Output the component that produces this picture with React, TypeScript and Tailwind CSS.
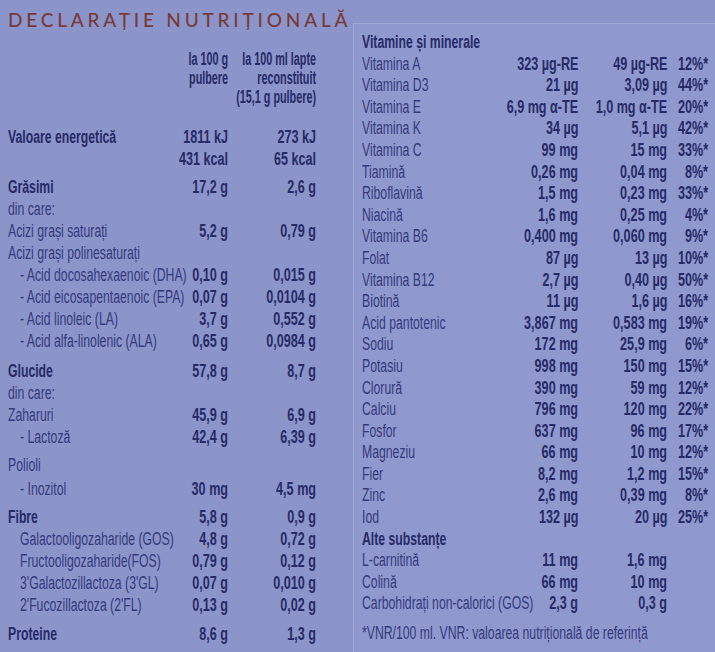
import React from "react";

type Row = {
  label: string;
  a?: string;
  b?: string;
  c?: string;
  bold?: boolean;
  indent?: boolean;
  gap?: string;
};

const leftRows: Row[] = [
  { label: "Valoare energetică", a: "1811 kJ", b: "273 kJ", bold: true },
  { label: "", a: "431 kcal", b: "65 kcal" },
  { label: "Grăsimi", a: "17,2 g", b: "2,6 g", bold: true, gap: "mt-[6px]" },
  { label: "din care:" },
  { label: "Acizi grași saturați", a: "5,2 g", b: "0,79 g" },
  { label: "Acizi grași polinesaturați" },
  { label: "- Acid docosahexaenoic (DHA)", a: "0,10 g", b: "0,015 g", indent: true },
  { label: "- Acid eicosapentaenoic (EPA)", a: "0,07 g", b: "0,0104 g", indent: true },
  { label: "- Acid linoleic (LA)", a: "3,7 g", b: "0,552 g", indent: true },
  { label: "- Acid alfa-linolenic (ALA)", a: "0,65 g", b: "0,0984 g", indent: true },
  { label: "Glucide", a: "57,8 g", b: "8,7 g", bold: true, gap: "mt-[8px]" },
  { label: "din care:" },
  { label: "Zaharuri", a: "45,9 g", b: "6,9 g" },
  { label: "- Lactoză", a: "42,4 g", b: "6,39 g", indent: true },
  { label: "Polioli", gap: "mt-[6px]" },
  { label: "- Inozitol", a: "30 mg", b: "4,5 mg", indent: true, gap: "mt-[2px]" },
  { label: "Fibre", a: "5,8 g", b: "0,9 g", bold: true, gap: "mt-[6px]" },
  { label: "Galactooligozaharide (GOS)", a: "4,8 g", b: "0,72 g", indent: true },
  { label: "Fructooligozaharide(FOS)", a: "0,79 g", b: "0,12 g", indent: true },
  { label: "3'Galactozillactoza (3'GL)", a: "0,07 g", b: "0,010 g", indent: true },
  { label: "2'Fucozillactoza (2'FL)", a: "0,13 g", b: "0,02 g", indent: true },
  { label: "Proteine", a: "8,6 g", b: "1,3 g", bold: true, gap: "mt-[7px]" },
  { label: "Vitamine și minerale", bold: true, gap: "mt-[5px]" },
];

const rightRows: Row[] = [
  { label: "Vitamine și minerale", bold: true },
  { label: "Vitamina A", a: "323 µg-RE", b: "49 µg-RE", c: "12%*" },
  { label: "Vitamina D3", a: "21 µg", b: "3,09 µg", c: "44%*" },
  { label: "Vitamina E", a: "6,9 mg α-TE", b: "1,0 mg α-TE", c: "20%*" },
  { label: "Vitamina K", a: "34 µg", b: "5,1 µg", c: "42%*" },
  { label: "Vitamina C", a: "99 mg", b: "15 mg", c: "33%*" },
  { label: "Tiamină", a: "0,26 mg", b: "0,04 mg", c: "8%*" },
  { label: "Riboflavină", a: "1,5 mg", b: "0,23 mg", c: "33%*" },
  { label: "Niacină", a: "1,6 mg", b: "0,25 mg", c: "4%*" },
  { label: "Vitamina B6", a: "0,400 mg", b: "0,060 mg", c: "9%*" },
  { label: "Folat", a: "87 µg", b: "13 µg", c: "10%*" },
  { label: "Vitamina B12", a: "2,7 µg", b: "0,40 µg", c: "50%*" },
  { label: "Biotină", a: "11 µg", b: "1,6 µg", c: "16%*" },
  { label: "Acid pantotenic", a: "3,867 mg", b: "0,583 mg", c: "19%*" },
  { label: "Sodiu", a: "172 mg", b: "25,9 mg", c: "6%*" },
  { label: "Potasiu", a: "998 mg", b: "150 mg", c: "15%*" },
  { label: "Clorură", a: "390 mg", b: "59 mg", c: "12%*" },
  { label: "Calciu", a: "796 mg", b: "120 mg", c: "22%*" },
  { label: "Fosfor", a: "637 mg", b: "96 mg", c: "17%*" },
  { label: "Magneziu", a: "66 mg", b: "10 mg", c: "12%*" },
  { label: "Fier", a: "8,2 mg", b: "1,2 mg", c: "15%*" },
  { label: "Zinc", a: "2,6 mg", b: "0,39 mg", c: "8%*" },
  { label: "Iod", a: "132 µg", b: "20 µg", c: "25%*" },
  { label: "Alte substanțe", bold: true },
  { label: "L-carnitină", a: "11 mg", b: "1,6 mg" },
  { label: "Colină", a: "66 mg", b: "10 mg" },
  { label: "Carbohidrați non-calorici (GOS)", a: "2,3 g", b: "0,3 g" },
];

const font = { fontFamily: '"Liberation Sans", Arial, sans-serif' };

// the printed label uses a very condensed face; squeeze Liberation Sans to match
const labelCls = "block whitespace-nowrap origin-left scale-x-[0.68]";
const valueCls =
  "block justify-self-end w-max whitespace-nowrap text-right origin-right scale-x-[0.7] font-bold text-[#262a68]";
const headCls =
  "block justify-self-end w-max whitespace-nowrap text-right origin-right scale-x-[0.6] font-bold text-[#262a68]";

function LeftRow({ row }: { row: Row }) {
  return (
    <div className={`grid grid-cols-[minmax(0,1fr)_88px_88px] leading-[22px] ${row.gap ?? ""}`}>
      <span className={`min-w-0 ${row.indent ? "pl-[12px]" : ""}`}>
        <span className={`${labelCls} ${row.bold ? "font-bold text-[#262a68]" : "text-[#343a7e]"}`}>
          {row.label}
        </span>
      </span>
      <span className={valueCls}>{row.a}</span>
      <span className={valueCls}>{row.b}</span>
    </div>
  );
}

function RightRow({ row }: { row: Row }) {
  return (
    <div className="grid grid-cols-[minmax(0,1fr)_100px_89px_41px] leading-[21.6px]">
      <span className="min-w-0">
        <span className={`${labelCls} ${row.bold ? "font-bold text-[#262a68]" : "text-[#343a7e]"}`}>
          {row.label}
        </span>
      </span>
      <span className={valueCls}>{row.a}</span>
      <span className={valueCls}>{row.b}</span>
      <span className={valueCls}>{row.c}</span>
    </div>
  );
}

export default function App() {
  return (
    <div className="min-h-screen w-[715px] h-[652px] overflow-hidden bg-[#8c95c9] flex text-[18px]" style={font}>
      {/* Left column */}
      <div className="w-[353px] shrink-0 min-w-0 pl-[8px] pr-[37px] pt-[8px]">
        <h1
          className="text-[19px] leading-[24px] tracking-[0.2em] font-medium text-[#773a3a] whitespace-nowrap"
          style={{ fontFamily: '"Lato", "Inter", sans-serif' }}
        >
          DECLARAȚIE NUTRIȚIONALĂ
        </h1>
        <div className="grid grid-cols-[minmax(0,1fr)_88px_88px] mt-[18px] leading-[19px]">
          <span />
          <span className={headCls}>
            la 100 g
            <br />
            pulbere
          </span>
          <span className={headCls}>
            la 100 ml lapte
            <br />
            reconstituit
            <br />
            (15,1 g pulbere)
          </span>
        </div>
        <div className="mt-[19px]">
          {leftRows.map((r, i) => (
            <LeftRow key={i} row={r} />
          ))}
        </div>
      </div>

      {/* Right column */}
      <div className="w-[362px] shrink-0 min-w-0 bg-[#9099cd] border-t border-l border-[#a0a8d6] mt-[23px] pl-[8px] pr-[7px] pt-[8px]">
        {rightRows.map((r, i) => (
          <RightRow key={i} row={r} />
        ))}
        <div className="mt-[8px] leading-[21.6px] min-w-0">
          <p className={`text-[#343a7e] ${labelCls}`}>*VNR/100 ml. VNR: valoarea nutrițională de referință</p>
        </div>
      </div>
    </div>
  );
}
